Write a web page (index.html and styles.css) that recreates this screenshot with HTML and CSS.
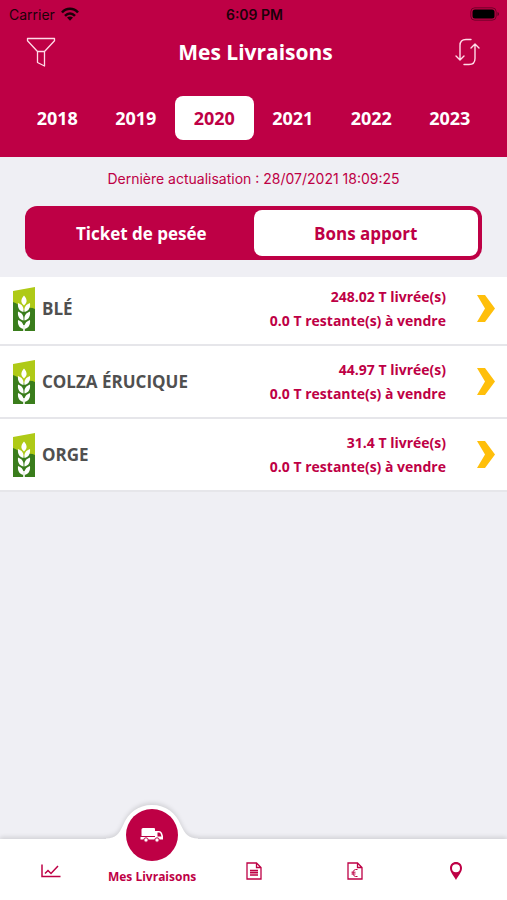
FILE: index.html
```html
<!DOCTYPE html>
<html lang="fr">
<head>
<meta charset="utf-8">
<meta name="viewport" content="width=device-width, initial-scale=1">
<title>Mes Livraisons</title>
<link rel="stylesheet" href="styles.css">
</head>
<body>
<svg class="defs" aria-hidden="true">
  <symbol id="wheat" viewBox="0 0 22 44">
    <path fill="#afca17" d="M0 4 22 0v44H0z"/>
    <path fill="#3a7d1c" d="M0 15c4 1 8 4 11 9 3-4 7-4 11-2v22H0z"/>
    <g fill="#fff">
      <path d="M11 8.500c3.500 4 3.500 7 0 10-3.500-3-3.500-6 0-10zM10.500 25C6 24 4.500 20.500 5 16c4.500 1.500 6 4.500 5.500 9zM11.500 25c4.500-1 6-4.500 5.500-9-4.500 1.500-6 4.500-5.500 9zM10.500 33.500C6 32.500 4.500 29 5 24.500c4.500 1.500 6 4.500 5.500 9zM11.500 33.500c4.500-1 6-4.500 5.500-9-4.500 1.500-6 4.500-5.500 9zM10.500 42C6 41 4.500 37.500 5 33c4.500 1.500 6 4.500 5.500 9zM11.500 42c4.500-1 6-4.500 5.500-9-4.500 1.500-6 4.500-5.500 9z"/>
      <path d="M10.200 38h1.600v6h-1.600z"/>
    </g>
  </symbol>
  <symbol id="chevron" viewBox="0 0 18 27"><path fill="#ffbf0b" d="M0 0h8l10 13.500L8 27H0l8-13.500z"/></symbol>
</svg>
<div class="app">
  <header class="header">
    <div class="status">
      <span class="carrier">Carrier
        <svg width="18" height="14" viewBox="0 0 18 14"><g fill="none" stroke="currentColor" stroke-width="2.600"><path d="M1 5.500C5.500.500 12.500.500 17 5.500M4 8.800c3-3 7-3 10 0"/></g><path fill="currentColor" d="M6 10.500c2-1.500 4-1.500 6 0l-3 3.200z"/></svg>
      </span>
      <span class="time">6:09 PM</span>
      <svg class="battery" width="30" height="14" viewBox="0 0 30 14"><rect x=".8" y=".8" width="25.400" height="12.400" rx="4" fill="none" stroke="#000" stroke-opacity=".4"/><rect x="2.500" y="2.500" width="22" height="9" rx="2.500"/><path d="M27.500 5c2 .8 2 3.200 0 4z" opacity=".5"/></svg>
    </div>
    <div class="titlebar">
      <button class="icon-button" type="button" aria-label="Filtrer">
        <svg width="30" height="30" viewBox="0 0 30 30" fill="none" stroke="currentColor" stroke-width="1.300" stroke-linejoin="round"><path d="M1.500 1.500h27v2.300L18.500 14.500v14.500l-7-3.500v-11L1.500 3.800zM11.500 14.500h7"/></svg>
      </button>
      <h1>Mes Livraisons</h1>
      <button class="icon-button" type="button" aria-label="Actualiser">
        <svg width="26" height="28" viewBox="0 0 26 28" fill="none" stroke="currentColor" stroke-width="1.400" stroke-linecap="round" stroke-linejoin="round"><path d="M16 1.500h-5q-6 0-6 6v14M1 18l4 4 4-4M9 26.500h5q6 0 6-6V6.500M16 10l4-4 4 4"/></svg>
      </button>
    </div>
    <nav class="years" aria-label="Année">
      <button type="button">2018</button>
      <button type="button">2019</button>
      <button type="button" class="selected" aria-pressed="true">2020</button>
      <button type="button">2021</button>
      <button type="button">2022</button>
      <button type="button">2023</button>
    </nav>
  </header>

  <main>
    <p class="updated">Dernière actualisation : 28/07/2021 18:09:25</p>
    <div class="segments">
      <button type="button">Ticket de pesée</button>
      <button type="button" class="selected" aria-pressed="true">Bons apport</button>
    </div>
    <ul class="crops">
      <li><a href="#ble">
        <svg width="22" height="44"><use href="#wheat"/></svg>
        <span class="name">BLÉ</span>
        <span class="amounts"><span>248.02 T livrée(s)</span><span>0.0 T restante(s) à vendre</span></span>
        <svg width="18" height="27"><use href="#chevron"/></svg>
      </a></li>
      <li><a href="#colza">
        <svg width="22" height="44"><use href="#wheat"/></svg>
        <span class="name">COLZA ÉRUCIQUE</span>
        <span class="amounts"><span>44.97 T livrée(s)</span><span>0.0 T restante(s) à vendre</span></span>
        <svg width="18" height="27"><use href="#chevron"/></svg>
      </a></li>
      <li><a href="#orge">
        <svg width="22" height="44"><use href="#wheat"/></svg>
        <span class="name">ORGE</span>
        <span class="amounts"><span>31.4 T livrée(s)</span><span>0.0 T restante(s) à vendre</span></span>
        <svg width="18" height="27"><use href="#chevron"/></svg>
      </a></li>
    </ul>
  </main>

  <nav class="tabs" aria-label="Navigation">
    <a href="#cours" aria-label="Cours">
      <svg width="20" height="16" viewBox="0 0 20 16" fill="none" stroke="currentColor" stroke-width="1.500"><path d="M1 1.500v12h18.500M4 10.500l3-3 3 3 7-7.500"/></svg>
    </a>
    <a href="#livraisons" class="active" aria-current="page">
      <svg class="bump" width="92" height="36" viewBox="0 0 92 36"><path fill="#fff" d="M0 36v-1.500c10 0 13-5 17-13C22 9 32 1 46 1s24 8 29 20.500c4 8 7 13 17 13V36z"/></svg>
      <span class="disc">
        <svg width="24" height="16" viewBox="0 0 24 16"><path fill="#fff" d="M3 1h11q1 0 1 1v7H1.500V2.500Q1.500 1 3 1zM.500 10H15V4h4q2 0 3 2l1 3v3.500H.500z"/><path fill="#be0045" d="M17.500 5.500H19q1 0 1.500 1l1 3h-4zM1 9.300h13.500v.8H1z"/><g fill="#fff" stroke="#be0045"><circle cx="6" cy="13" r="2.200"/><circle cx="17" cy="13" r="2.200"/></g></svg>
      </span>
      <span class="label">Mes Livraisons</span>
    </a>
    <a href="#documents" aria-label="Documents">
      <svg width="16" height="18" viewBox="0 0 16 18" fill="none" stroke="currentColor" stroke-width="1.300"><path d="M1 1h9.500L15 5.500V17H1zM10.500 1v4.500H15"/><path d="M4 8.500h8M4 10.700h8M4 13h8" stroke-width="1.700"/></svg>
    </a>
    <a href="#factures" aria-label="Factures">
      <svg width="16" height="18" viewBox="0 0 16 18" fill="none" stroke="currentColor" stroke-width="1.300"><path d="M1 1h9.500L15 5.500V17H1zM10.500 1v4.500H15"/><path d="M10.500 7.500C7.500 7 6 8.500 6 11s1.500 4 4.500 3.500M4.500 10.200h4M4.500 12h4" stroke-width="1"/></svg>
    </a>
    <a href="#carte" aria-label="Carte">
      <svg width="14" height="18" viewBox="0 0 14 18"><path fill="currentColor" fill-rule="evenodd" d="M7 0c3.500 0 6 2.600 6 6 0 4-3.500 7.500-6 12C4.500 13.500 1 10 1 6c0-3.400 2.500-6 6-6zm0 2.200A4 4 0 1 0 7 10.200 4 4 0 0 0 7 2.200z"/></svg>
    </a>
  </nav>
</div>
</body>
</html>
```
FILE: styles.css
```css
:root {
  --brand: #be0045;
  --paper: #efeff4;
  --line: #e6e6ea;
}
* { box-sizing: border-box; }
body {
  margin: 0;
  background: var(--paper);
  color: var(--brand);
  font-family: "Open Sans", "Noto Sans", sans-serif;
}
button {
  border: 0;
  padding: 0;
  background: none;
  color: inherit;
  font: inherit;
  cursor: pointer;
}
a { color: inherit; text-decoration: none; }
svg { display: block; flex: none; }
.defs { position: absolute; width: 0; height: 0; }
.app { min-height: 100vh; display: flex; flex-direction: column; }

.header { background: var(--brand); color: #fff; padding-bottom: 17px; }
.status {
  display: grid;
  grid-template-columns: 1fr auto 1fr;
  align-items: center;
  height: 28px;
  padding: 0 7px 0 9px;
  color: #1c0009;
  font: 14px Inter, sans-serif;
}
.carrier { display: flex; align-items: center; gap: 6px; }
.time { font-weight: 600; }
.battery { justify-self: end; }
.titlebar {
  display: flex;
  align-items: center;
  justify-content: space-between;
  height: 48px;
  padding: 0 26px;
}
.icon-button { display: flex; color: #ffdbe8; }
h1 { margin: 0; font-size: 21px; font-weight: 700; line-height: 28px; }
.years { display: flex; margin-top: 20px; padding: 0 18px; }
.years button {
  flex: 1;
  height: 44px;
  border-radius: 8px;
  font-size: 18px;
  font-weight: 700;
}
.years .selected { background: #fff; color: var(--brand); }

main { flex: 1; }
.updated {
  margin: 0;
  padding: 12px 0 17px;
  text-align: center;
  font: 14px/20px Inter, sans-serif;
}
.segments {
  display: flex;
  margin: 0 25px 17px;
  padding: 4px;
  border-radius: 12px;
  background: var(--brand);
  color: #fff;
}
.segments button {
  flex: 1;
  height: 46px;
  border-radius: 8px;
  font-size: 17px;
  font-weight: 700;
}
.segments .selected { background: #fff; color: var(--brand); }

.crops { margin: 0; padding: 0; list-style: none; overflow: hidden; }
.crops li { background: #fff; border-bottom: 2px solid var(--line); }
.crops li:first-child { margin-top: -4px; }
.crops a {
  display: flex;
  align-items: center;
  height: 71px;
  padding: 0 12px 0 13px;
}
.name { flex: 1; margin-left: 7px; color: #505050; font-size: 17px; font-weight: 700; }
.amounts {
  display: flex;
  flex-direction: column;
  margin-right: 31px;
  text-align: right;
  font-size: 14px;
  font-weight: 700;
  line-height: 24px;
}

.tabs {
  position: sticky;
  bottom: 0;
  display: flex;
  height: 61px;
  background: #fff;
  filter: drop-shadow(0 -2px 2px rgba(0, 0, 0, .12));
}
.tabs a {
  position: relative;
  flex: 1;
  display: flex;
  align-items: center;
  justify-content: center;
  padding-top: 3px;
}
.tabs .active { flex-direction: column; justify-content: flex-end; padding: 0 0 14px; }
.bump { position: absolute; bottom: 60px; left: 50%; margin-left: -46px; }
.disc {
  position: absolute;
  bottom: 39px;
  left: 50%;
  margin-left: -26px;
  display: flex;
  align-items: center;
  justify-content: center;
  width: 52px;
  height: 52px;
  border-radius: 50%;
  background: var(--brand);
}
.label { font-size: 12px; font-weight: 700; line-height: 18px; white-space: nowrap; }
```
